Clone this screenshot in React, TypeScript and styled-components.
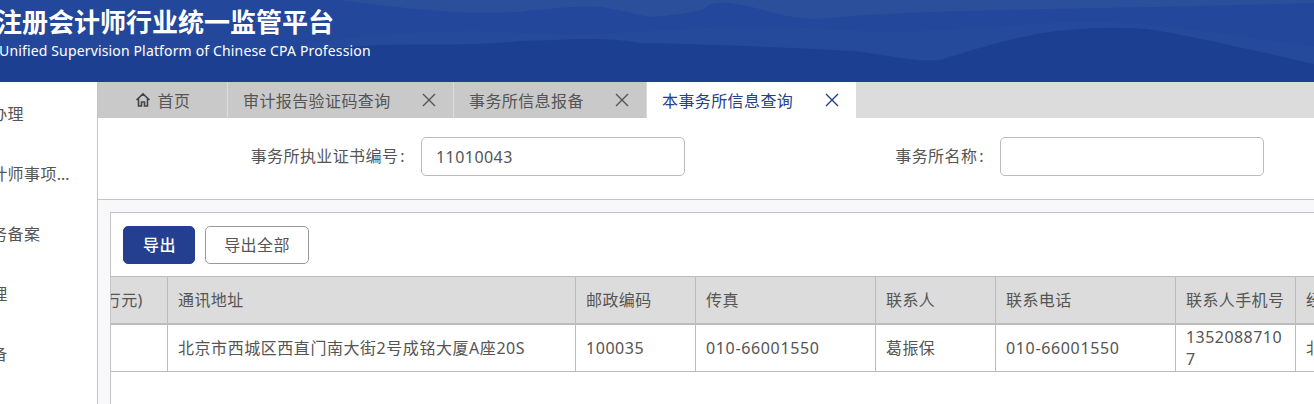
import React from "react";
import styled, { createGlobalStyle } from "styled-components";

const Global = createGlobalStyle`
  html, body { margin: 0; padding: 0; background: #fff; overflow: hidden; }
  body { font-family: "Noto Sans", "Noto Sans CJK SC", sans-serif; color: #555; }
  * { box-sizing: border-box; }
`;

const Page = styled.div`
  width: 1314px;
  height: 404px;
  overflow: hidden;
  display: flex;
  flex-direction: column;
`;

const Header = styled.header`
  position: relative;
  flex: 0 0 82px;
  overflow: hidden;
  background: #1c3f92;
  color: #fff;
`;

const HeaderArt = styled.svg`
  position: absolute;
  inset: 0;
  width: 100%;
  height: 100%;
`;

const Brand = styled.div`
  position: relative;
  margin-left: -4px;
  padding-top: 3px;
`;

const BrandTitle = styled.div`
  font-size: 26px;
  font-weight: 700;
  line-height: 38px;
  white-space: nowrap;
`;

const BrandSub = styled.div`
  font-size: 14px;
  line-height: 20px;
  letter-spacing: 0.15px;
  white-space: nowrap;
  padding-left: 3px;
`;

const Body = styled.div`
  flex: 1;
  display: flex;
  min-height: 0;
`;

const Sidebar = styled.nav`
  flex: 0 0 98px;
  border-right: 1px solid #c4c4c4;
  overflow: hidden;
  padding-top: 2px;
`;

const NavItem = styled.div`
  height: 60px;
  width: 134px;
  margin-left: -58px;
  line-height: 60px;
  font-size: 16px;
  letter-spacing: 0.4px;
  white-space: nowrap;
  overflow: hidden;
  text-overflow: ellipsis;
`;

const Main = styled.main`
  flex: 1;
  min-width: 0;
  display: flex;
  flex-direction: column;
  background: #f8f8fb;
`;

const Tabs = styled.div`
  flex: 0 0 36px;
  display: flex;
  background: #dcdcdc;
`;

const Tab = styled.div<{ $active?: boolean; $width: number }>`
  width: ${(p) => p.$width}px;
  margin-right: ${(p) => (p.$active ? 0 : 1)}px;
  display: flex;
  align-items: center;
  justify-content: ${(p) => (p.$width < 140 ? "center" : "flex-start")};
  padding: ${(p) => (p.$width < 140 ? "0" : "0 17px 0 15px")};
  background: ${(p) => (p.$active ? "#fff" : "#c9c9c9")};
  color: ${(p) => (p.$active ? "#27408b" : "#555")};
  font-size: 16px;
  letter-spacing: 0.4px;
  white-space: nowrap;
`;

const TabClose = styled.svg`
  margin-left: auto;
  width: 14px;
  height: 14px;
  stroke: currentColor;
  stroke-width: 1.4;
  fill: none;
`;

const HomeIcon = styled.svg`
  width: 16px;
  height: 16px;
  margin-right: 7px;
  stroke: #444;
  stroke-width: 1.6;
  fill: none;
`;

const Filter = styled.div`
  flex: 0 0 82px;
  display: flex;
  padding: 19px 0 0 8px;
  background: #fff;
  border-bottom: 1px solid #c4c4c4;
`;

const Field = styled.label`
  flex: 0 0 579px;
  display: flex;
  align-items: flex-start;
`;

const FieldLabel = styled.span`
  flex: 1;
  text-align: right;
  padding-right: 16px;
  font-size: 16px;
  line-height: 39px;
  letter-spacing: 0.4px;
  white-space: nowrap;
`;

const Colon = styled.span`
  margin-left: 2px;
`;

const Input = styled.input`
  flex: 0 0 264px;
  height: 39px;
  padding: 0 14px;
  border: 1px solid #bbb;
  border-radius: 5px;
  outline: none;
  font-family: inherit;
  font-size: 16px;
  letter-spacing: 0.45px;
  color: #555;
`;

const Panel = styled.section`
  flex: 1;
  min-height: 0;
  margin: 12px 0 0 12px;
  background: #fff;
  border: 1px solid #c4c4c4;
  border-right: none;
  border-bottom: none;
  overflow: hidden;
`;

const Toolbar = styled.div`
  display: flex;
  gap: 10px;
  height: 63px;
  padding: 13px 0 0 12px;
`;

const Button = styled.button<{ $primary?: boolean }>`
  height: 38px;
  width: ${(p) => (p.$primary ? 72 : 104)}px;
  padding: 0 0 2px ${(p) => (p.$primary ? 1 : 0)}px;
  border-radius: 5px;
  border: 1px solid ${(p) => (p.$primary ? "#243f8f" : "#999")};
  background: ${(p) => (p.$primary ? "#243f8f" : "#fff")};
  color: ${(p) => (p.$primary ? "#fff" : "#555")};
  font-family: inherit;
  font-size: 16px;
  font-weight: ${(p) => (p.$primary ? 500 : 400)};
  letter-spacing: 0.4px;
`;

const Table = styled.table`
  table-layout: fixed;
  border-collapse: collapse;
  width: 1500px;
  margin-left: -88px;
  font-size: 16px;
  letter-spacing: 0.4px;
  color: #555;
`;

const HeadCell = styled.th<{ $width: number }>`
  width: ${(p) => p.$width}px;
  height: 47px;
  padding: 0 10px 1px;
  background: #dcdcdc;
  border: 1px solid #bbb;
  border-bottom-width: 2px;
  font-weight: 400;
  text-align: left;
  white-space: nowrap;
  overflow: hidden;
`;

const Cell = styled.td<{ $spacing: number }>`
  height: 48px;
  padding: 0 10px;
  border: 1px solid #bbb;
  line-height: 22px;
  letter-spacing: ${(p) => p.$spacing}px;
  word-break: break-all;
  overflow: hidden;
`;

const columns: [string, number, string, number][] = [
  ["注册资本(万元)", 144, "", 0.4],
  ["通讯地址", 408, "北京市西城区西直门南大街2号成铭大厦A座20S", 0.55],
  ["邮政编码", 120, "100035", 0.55],
  ["传真", 180, "010-66001550", 0.65],
  ["联系人", 120, "葛振保", 0.4],
  ["联系电话", 180, "010-66001550", 0.65],
  ["联系人手机号", 120, "13520887107", 0.45],
  ["经营地址", 228, "北京市西城区", 0.4],
];

const navItems = ["事务所办理", "注册会计师事项变更备案", "执业业务备案", "报告管理", "变更报备"];

const Close = () => (
  <TabClose viewBox="0 0 14 14">
    <path d="M1 1 L13 13 M13 1 L1 13" />
  </TabClose>
);

export default function App() {
  return (
    <Page>
      <Global />
      <Header>
        <HeaderArt viewBox="0 0 1314 82" preserveAspectRatio="none">
          <path fill="#2c4f9c" d="M0 0H1314V82H0Z" />
          <path fill="#23479a" d="M0 0H340C370 4 400 8 430 10C470 14 490 13 520 12C550 8 580 6 600 7C615 9 630 13 650 17C670 16 690 13 705 9C708 3 718 2 730 3C745 5 755 8 770 12C790 18 810 20 830 18C870 14 930 12 1000 10C1100 8 1220 6 1314 3V82H0Z" />
          <path fill="#25499b" d="M300 44C360 36 420 30 480 31C520 32 560 36 600 34C680 28 760 24 850 30C900 34 980 28 1060 22C1150 18 1240 38 1314 46V82H300Z" />
          <path fill="#1c3f92" d="M0 52C120 58 240 54 380 45C430 44 480 46 520 41C570 40 600 36 640 43C700 44 780 47 855 51C890 56 915 62 940 60C980 48 1030 32 1069 30C1100 27 1130 27 1155 30C1210 40 1270 54 1314 64V82H0Z" />
        </HeaderArt>
        <Brand>
          <BrandTitle>注册会计师行业统一监管平台</BrandTitle>
          <BrandSub>Unified Supervision Platform of Chinese CPA Profession</BrandSub>
        </Brand>
      </Header>
      <Body>
        <Sidebar>
          {navItems.map((item) => (
            <NavItem key={item}>{item}</NavItem>
          ))}
        </Sidebar>
        <Main>
          <Tabs>
            <Tab $width={129}>
              <HomeIcon viewBox="0 0 16 16">
                <path d="M1.5 8 L8 1.8 L14.5 8 M3.5 6.5 V14 H6.5 V10 H9.5 V14 H12.5 V6.5" />
              </HomeIcon>
              首页
            </Tab>
            <Tab $width={225}>审计报告验证码查询<Close /></Tab>
            <Tab $width={192}>事务所信息报备<Close /></Tab>
            <Tab $width={209} $active>本事务所信息查询<Close /></Tab>
          </Tabs>
          <Filter>
            <Field>
              <FieldLabel>事务所执业证书编号<Colon>:</Colon></FieldLabel>
              <Input defaultValue="11010043" />
            </Field>
            <Field>
              <FieldLabel>事务所名称<Colon>:</Colon></FieldLabel>
              <Input />
            </Field>
          </Filter>
          <Panel>
            <Toolbar>
              <Button $primary>导出</Button>
              <Button>导出全部</Button>
            </Toolbar>
            <Table>
              <thead>
                <tr>
                  {columns.map(([title, width]) => (
                    <HeadCell key={title} $width={width}>{title}</HeadCell>
                  ))}
                </tr>
              </thead>
              <tbody>
                <tr>
                  {columns.map(([title, , value, spacing]) => (
                    <Cell key={title} $spacing={spacing}>{value}</Cell>
                  ))}
                </tr>
              </tbody>
            </Table>
          </Panel>
        </Main>
      </Body>
    </Page>
  );
}
